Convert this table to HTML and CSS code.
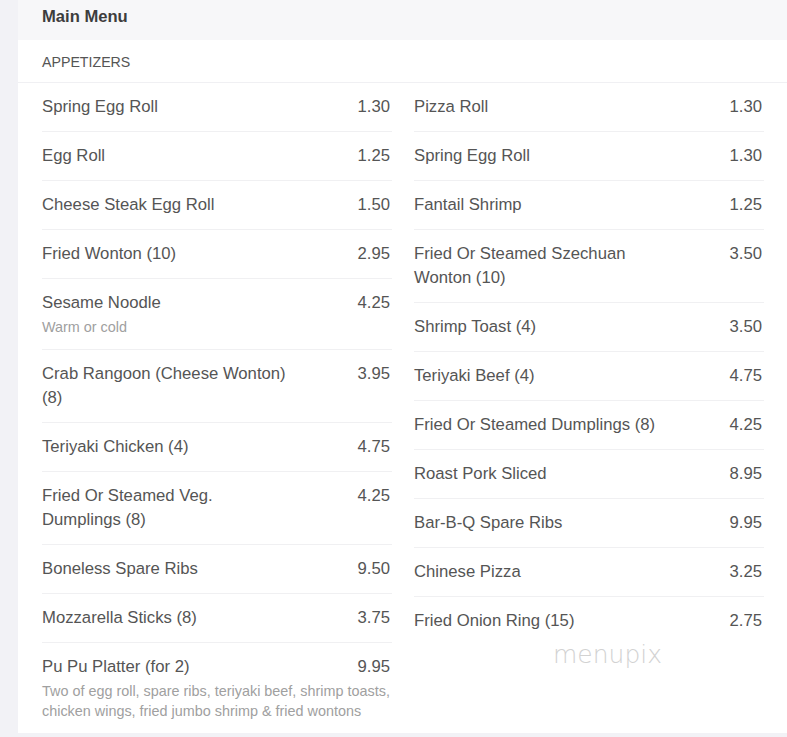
FILE: index.html
```html
<!DOCTYPE html>
<html>
<head>
<meta charset="utf-8">
<link rel="stylesheet" href="styles.css">
</head>
<body>
<div class="page">
  <div class="card">
    <div class="card-header">Main Menu</div>
    <div class="section-title">APPETIZERS</div>
    <div class="columns">
      <div class="col">
        <div class="item"><div class="name">Spring Egg Roll</div><div class="price">1.30</div></div>
        <div class="item"><div class="name">Egg Roll</div><div class="price">1.25</div></div>
        <div class="item"><div class="name">Cheese Steak Egg Roll</div><div class="price">1.50</div></div>
        <div class="item"><div class="name">Fried Wonton (10)</div><div class="price">2.95</div></div>
        <div class="item"><div class="name">Sesame Noodle<div class="desc">Warm or cold</div></div><div class="price">4.25</div></div>
        <div class="item"><div class="name">Crab Rangoon (Cheese Wonton) (8)</div><div class="price">3.95</div></div>
        <div class="item"><div class="name">Teriyaki Chicken (4)</div><div class="price">4.75</div></div>
        <div class="item"><div class="name">Fried Or Steamed Veg. Dumplings (8)</div><div class="price">4.25</div></div>
        <div class="item"><div class="name">Boneless Spare Ribs</div><div class="price">9.50</div></div>
        <div class="item"><div class="name">Mozzarella Sticks (8)</div><div class="price">3.75</div></div>
        <div class="item wide"><div class="name">Pu Pu Platter (for 2)<div class="desc">Two of egg roll, spare ribs, teriyaki beef, shrimp toasts, chicken wings, fried jumbo shrimp &amp; fried wontons</div></div><div class="price">9.95</div></div>
      </div>
      <div class="col">
        <div class="item"><div class="name">Pizza Roll</div><div class="price">1.30</div></div>
        <div class="item"><div class="name">Spring Egg Roll</div><div class="price">1.30</div></div>
        <div class="item"><div class="name">Fantail Shrimp</div><div class="price">1.25</div></div>
        <div class="item"><div class="name">Fried Or Steamed Szechuan Wonton (10)</div><div class="price">3.50</div></div>
        <div class="item"><div class="name">Shrimp Toast (4)</div><div class="price">3.50</div></div>
        <div class="item"><div class="name">Teriyaki Beef (4)</div><div class="price">4.75</div></div>
        <div class="item"><div class="name">Fried Or Steamed Dumplings (8)</div><div class="price">4.25</div></div>
        <div class="item"><div class="name">Roast Pork Sliced</div><div class="price">8.95</div></div>
        <div class="item"><div class="name">Bar-B-Q Spare Ribs</div><div class="price">9.95</div></div>
        <div class="item"><div class="name">Chinese Pizza</div><div class="price">3.25</div></div>
        <div class="item"><div class="name">Fried Onion Ring (15)</div><div class="price">2.75</div></div>
      </div>
    </div>
    <div class="watermark">menupix</div>
  </div>
</div>
</body>
</html>
```

FILE: styles.css
```css
html, body {
  margin: 0;
  padding: 0;
  background: #f2f2f6;
  font-family: "Liberation Sans", Arial, sans-serif;
}
.page {
  padding-left: 18px;
  overflow: hidden;
  height: 737px;
}
.card {
  position: relative;
  background: #fff;
  width: 769px;
}
.card-header {
  background: #f7f7f9;
  height: 40px;
  box-sizing: border-box;
  padding: 5px 24px 0;
  font-weight: bold;
  font-size: 16.6px;
  line-height: 24px;
  color: #3d3d3d;
}
.section-title {
  padding: 12px 24px 10px;
  font-size: 14.2px;
  line-height: 20px;
  color: #555;
  border-bottom: 1px solid #f0f0f3;
}
.columns {
  display: grid;
  grid-template-columns: 350px 350px;
  column-gap: 22px;
  padding: 0 24px;
  align-items: start;
}
.item {
  display: flex;
  padding: 12px 0;
  border-bottom: 1px solid #f0f0f2;
  font-size: 16.7px;
  line-height: 24px;
  color: #555;
}
.item:last-child {
  border-bottom: none;
}
.name {
  width: 248px;
}
.wide .name {
  width: 350px;
  flex: none;
  margin-right: -350px;
}
.price {
  flex: 1;
  text-align: right;
  padding-right: 2px;
}
.desc {
  margin-top: 2px;
  font-size: 14.4px;
  line-height: 20px;
  color: #a0a0a0;
}
.watermark {
  position: absolute;
  left: 535px;
  top: 640px;
  font-family: "DejaVu Sans", sans-serif;
  font-weight: 200;
  font-size: 25px;
  color: #d2d2d2;
}
```
